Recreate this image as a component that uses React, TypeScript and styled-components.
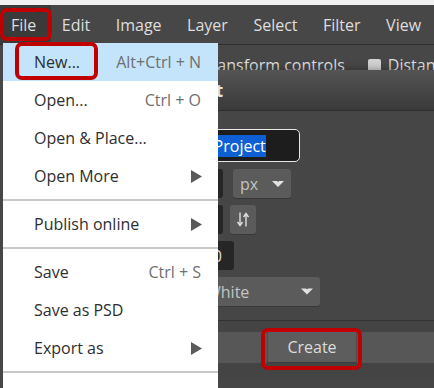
import React from 'react';
import styled, { createGlobalStyle } from 'styled-components';

const GlobalStyle = createGlobalStyle`
  html, body {
    margin: 0;
    padding: 0;
    background: #474747;
    overflow: hidden;
  }
  * {
    box-sizing: border-box;
  }
`;

type Entry =
  | { kind: 'item'; label: string; shortcut?: string; sub?: boolean; active?: boolean }
  | { kind: 'sep' };

const FILE_MENU: Entry[] = [
  { kind: 'item', label: 'New...', shortcut: 'Alt+Ctrl + N', active: true },
  { kind: 'item', label: 'Open...', shortcut: 'Ctrl + O' },
  { kind: 'item', label: 'Open & Place...' },
  { kind: 'item', label: 'Open More', sub: true },
  { kind: 'sep' },
  { kind: 'item', label: 'Publish online', sub: true },
  { kind: 'sep' },
  { kind: 'item', label: 'Save', shortcut: 'Ctrl + S' },
  { kind: 'item', label: 'Save as PSD' },
  { kind: 'item', label: 'Export as', sub: true },
  { kind: 'sep' },
];

const TOP_MENUS = ['File', 'Edit', 'Image', 'Layer', 'Select', 'Filter', 'View'];

const SubArrow = () => (
  <svg width="11" height="13" viewBox="0 0 11 13">
    <polygon points="0,0 11,6.5 0,13" fill="#5a5a5a" />
  </svg>
);

const DropArrow = ({ w = 12, h = 6 }: { w?: number; h?: number }) => (
  <svg width={w} height={h} viewBox="0 0 12 6">
    <polygon points="0,0 5,0 6,1 7,0 12,0 6,6" fill="#e2e2e2" />
  </svg>
);

const SwapIcon = () => (
  <svg width="12" height="15" viewBox="0 0 12 15" fill="none" stroke="#e0e0e0" strokeWidth="1.4">
    <line x1="3" y1="0.5" x2="3" y2="13" />
    <polyline points="0.5,10 3,13.5 5.5,10" />
    <line x1="9" y1="2" x2="9" y2="14.5" />
    <polyline points="6.5,5 9,1.5 11.5,5" />
  </svg>
);

const App: React.FC = () => {
  return (
    <Page>
      <GlobalStyle />
      <TopStrip />
      <MenuBar>
        {TOP_MENUS.map(name => (
          <MenuBarItem key={name} active={name === 'File'}>
            {name}
          </MenuBarItem>
        ))}
      </MenuBar>
      <ToolBar>
        <CheckGroup>
          <CheckBox />
          <span>Transform controls</span>
        </CheckGroup>
        <CheckGroup>
          <CheckBox />
          <span>Distances</span>
        </CheckGroup>
      </ToolBar>

      {/* the New Project dialog, its label column sits under the open menu */}
      <Dialog>
        <DialogHeader>New Project</DialogHeader>
        <DialogBody>
          <FormRow>
            <LabelCell />
            <NameInput>
              New <Selected>Project</Selected>
            </NameInput>
          </FormRow>
          <FormRow>
            <LabelCell />
            <NumberField width={55}>1280</NumberField>
            <SelectBox width={58} gap={10} pad={7}>
              <span>px</span>
              <DropArrow />
            </SelectBox>
          </FormRow>
          <FormRow>
            <LabelCell />
            <NumberField width={55}>720</NumberField>
            <IconButton>
              <SwapIcon />
            </IconButton>
          </FormRow>
          <FormRow>
            <LabelCell />
            <NumberField width={66}>300</NumberField>
          </FormRow>
          <FormRow>
            <LabelCell width={78} />
            <SelectBox width={122} gap={0} pad={8}>
              <span>White</span>
              <DropArrow w={12} h={7} />
            </SelectBox>
          </FormRow>
        </DialogBody>
        <DialogFooter>
          <ButtonBand>
            <CreateButton>Create</CreateButton>
          </ButtonBand>
        </DialogFooter>
      </Dialog>

      <DropMenu>
        {FILE_MENU.map((entry, i) =>
          entry.kind === 'sep' ? (
            <Separator key={i} />
          ) : (
            <MenuItem key={i} active={entry.active}>
              <span>{entry.label}</span>
              {entry.shortcut && <Shortcut>{entry.shortcut}</Shortcut>}
              {entry.sub && <SubArrow />}
            </MenuItem>
          )
        )}
      </DropMenu>

      <Callout top={8} left={0} width={52} height={33} />
      <Callout top={42} left={15} width={83} height={38} />
      <Callout top={328} left={261} width={101} height={42} />
    </Page>
  );
};

const Page = styled.div`
  position: relative;
  width: 434px;
  height: 388px;
  overflow: hidden;
  background: #474747;
  font-family: 'Open Sans', 'Noto Sans', sans-serif;
  font-size: 16px;
`;

const TopStrip = styled.div`
  height: 5px;
  background: #f1f1f1;
`;

const MenuBar = styled.div`
  display: flex;
  height: 40px;
  background: #474747;
  border-bottom: 1px solid #2f2f2f;
`;

const MenuBarItem = styled.div<{ active?: boolean }>`
  display: flex;
  align-items: center;
  padding: 0 14.5px 0 11px;
  color: #dedede;
  background: ${props => (props.active ? '#3a3a3a' : 'transparent')};
`;

const ToolBar = styled.div`
  display: flex;
  align-items: center;
  gap: 23px;
  height: 40px;
  padding-left: 182px;
  color: #dedede;
  white-space: nowrap;
`;

const CheckGroup = styled.div`
  display: flex;
  align-items: center;
  gap: 7px;
`;

const CheckBox = styled.div`
  width: 13px;
  height: 13px;
  border-radius: 2px;
  background: #d2d2d2;
`;

const Dialog = styled.div`
  position: absolute;
  top: 70px;
  left: 108px;
  width: 408px;
  height: 330px;
  background: #464646;
  box-shadow: 0 0 8px rgba(0, 0, 0, 0.4);
`;

const DialogHeader = styled.div`
  display: flex;
  align-items: center;
  height: 41px;
  padding-left: 12px;
  background: linear-gradient(#545454, #3a3a3a);
  border-bottom: 1px solid #2e2e2e;
  color: #e4e4e4;
  font-size: 17px;
  font-weight: 700;
`;

const DialogBody = styled.div`
  display: flex;
  flex-direction: column;
  gap: 7px;
  padding: 18px 0 0 12px;
`;

const FormRow = styled.div`
  display: flex;
  align-items: stretch;
  height: 29px;
  &:first-child {
    height: 33px;
  }
`;

const LabelCell = styled.div<{ width?: number }>`
  width: ${props => props.width ?? 48}px;
`;

const NameInput = styled.div`
  display: flex;
  align-items: center;
  width: 132px;
  padding-left: 7px;
  background: #1d1d1d;
  border: 1px solid #e8e8e8;
  border-radius: 5px;
  color: #ffffff;
  white-space: pre;
`;

const Selected = styled.span`
  background: #0f5fd4;
  color: #ffffff;
`;

const NumberField = styled.div<{ width: number }>`
  display: flex;
  align-items: center;
  justify-content: flex-end;
  width: ${props => props.width}px;
  padding-right: 12px;
  background: #262626;
  border-radius: 3px;
  color: #e0e0e0;
`;

const SelectBox = styled.div<{ width: number; gap: number; pad: number }>`
  display: flex;
  align-items: center;
  justify-content: space-between;
  width: ${props => props.width}px;
  margin-left: ${props => props.gap}px;
  padding: 0 7px 0 ${props => props.pad}px;
  background: #5b5b5b;
  border-radius: 3px;
  box-shadow: 0 1px 0 #393939;
  color: #c4c4c4;
`;

const IconButton = styled.div`
  display: flex;
  align-items: center;
  justify-content: center;
  width: 26px;
  margin-left: 7px;
  background: #5b5b5b;
  border-radius: 3px;
  box-shadow: 0 1px 0 #393939;
`;

const DialogFooter = styled.div`
  margin-top: 14px;
  padding-top: 11px;
  border-top: 1px solid #333333;
  background: #444444;
  height: 60px;
`;

const ButtonBand = styled.div`
  display: flex;
  justify-content: center;
  height: 31px;
  background: #575757;
`;

const CreateButton = styled.div`
  display: flex;
  align-items: center;
  justify-content: center;
  width: 90px;
  background: #5d5d5d;
  border-bottom: 1px solid #3c3c3c;
  border-left: 1px solid #4c4c4c;
  border-right: 1px solid #4c4c4c;
  color: #dcdcdc;
`;

const DropMenu = styled.div`
  position: absolute;
  top: 43px;
  left: 3px;
  width: 215px;
  height: 360px;
  background: #ffffff;
`;

const MenuItem = styled.div<{ active?: boolean }>`
  display: flex;
  align-items: center;
  justify-content: space-between;
  height: 38px;
  padding: 0 16px 0 31px;
  background: ${props => (props.active ? '#c3e4fb' : 'transparent')};
  color: #2e2e2e;
  white-space: nowrap;
`;

const Shortcut = styled.span`
  color: #6f6f6f;
  padding-right: 1px;
`;

const Separator = styled.div`
  height: 10px;
  display: flex;
  align-items: center;
  &::after {
    content: '';
    flex: 1;
    height: 2px;
    background: #c9c9c9;
  }
`;

const Callout = styled.div<{ top: number; left: number; width: number; height: number }>`
  position: absolute;
  top: ${props => props.top}px;
  left: ${props => props.left}px;
  width: ${props => props.width}px;
  height: ${props => props.height}px;
  border: 4px solid #c00000;
  border-radius: 7px;
  pointer-events: none;
`;

export default App;
